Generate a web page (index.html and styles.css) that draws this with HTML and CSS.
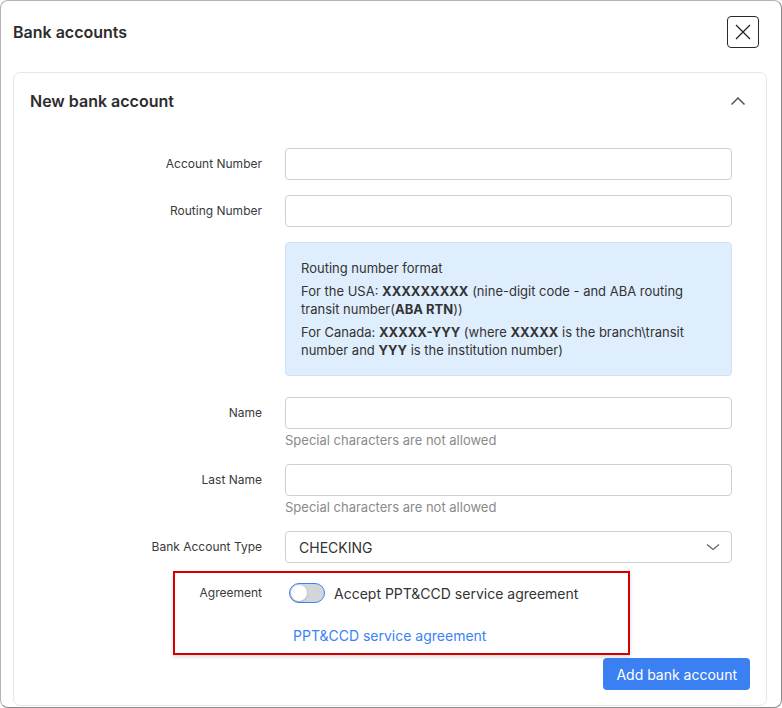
FILE: index.html
```html
<!DOCTYPE html>
<html lang="en">
<head>
  <meta charset="UTF-8">
  <title>Bank accounts</title>
  <link rel="stylesheet" href="styles.css">
</head>
<body>
  <!-- Modal -->
  <div class="modal">
    <div class="modal-header">
      <h2>Bank accounts</h2>
      <button class="close-btn" aria-label="Close">
        <svg width="18" height="18" viewBox="0 0 18 18"><path d="M2 2L16 16M16 2L2 16" stroke="#222" stroke-width="1.3" fill="none"/></svg>
      </button>
    </div>

    <!-- Card -->
    <div class="card">
      <div class="card-header">
        <h3>New bank account</h3>
        <svg width="16" height="10" viewBox="0 0 16 10"><path d="M1.5 8.5L8 2L14.5 8.5" stroke="#555" stroke-width="1.5" fill="none"/></svg>
      </div>

      <div class="form">
        <div class="row">
          <label>Account Number</label>
          <div class="field"><input type="text"></div>
        </div>
        <div class="row">
          <label>Routing Number</label>
          <div class="field"><input type="text"></div>
        </div>
        <div class="row info-row">
          <span></span>
          <div class="info">
            <p>Routing number format</p>
            <p>For the USA: <b>XXXXXXXXX</b> (nine-digit code - and ABA routing transit number(<b>ABA RTN</b>))</p>
            <p>For Canada: <b>XXXXX-YYY</b> (where <b>XXXXX</b> is the branch\transit number and <b>YYY</b> is the institution number)</p>
          </div>
        </div>
        <div class="row">
          <label>Name</label>
          <div class="field">
            <input type="text">
            <div class="help">Special characters are not allowed</div>
          </div>
        </div>
        <div class="row">
          <label>Last Name</label>
          <div class="field">
            <input type="text">
            <div class="help">Special characters are not allowed</div>
          </div>
        </div>
        <div class="row">
          <label>Bank Account Type</label>
          <div class="field">
            <div class="select">
              <span>CHECKING</span>
              <svg width="14" height="8" viewBox="0 0 14 8"><path d="M1 1.5L7 6.5L13 1.5" stroke="#666" stroke-width="1.3" fill="none"/></svg>
            </div>
          </div>
        </div>

        <div class="agreement">
          <div class="row toggle-row">
            <label>Agreement</label>
            <div class="field toggle-field">
              <span class="toggle"><span class="knob"></span></span>
              <span class="toggle-text">Accept PPT&amp;CCD service agreement</span>
            </div>
          </div>
          <div class="row link-row">
            <span></span>
            <div class="field"><a href="#" class="link">PPT&amp;CCD service agreement</a></div>
          </div>
        </div>
      </div>

      <div class="actions">
        <button class="primary">Add bank account</button>
      </div>
    </div>
  </div>
</body>
</html>
```

FILE: styles.css
```css
* {
  box-sizing: border-box;
}

body {
  margin: 0;
  background: #fff;
  font-family: Inter, "Noto Sans", sans-serif;
  color: #333;
}

.modal {
  width: 782px;
  height: 708px;
  border: 1px solid #b4b4b4;
  border-right-color: #8a8a8a;
  border-bottom-color: #8a8a8a;
  border-radius: 8px;
  overflow: hidden;
  padding: 15px 14px 0 12px;
}

.modal-header {
  display: flex;
  justify-content: space-between;
  align-items: center;
  height: 32px;
  padding-right: 8px;
}

.modal-header h2 {
  margin: 0;
  font-size: 16px;
  font-weight: 600;
  color: #2d2d2d;
}

.close-btn {
  width: 32px;
  height: 32px;
  border: 1px solid #2a2a2a;
  border-radius: 4px;
  background: #fff;
  display: flex;
  align-items: center;
  justify-content: center;
  padding: 0;
}

.card {
  margin-top: 24px;
  border: 1px solid #e3e6ea;
  border-radius: 7px;
  height: 634px;
}

.card-header {
  display: flex;
  justify-content: space-between;
  align-items: center;
  padding: 16px 20px 16px 16px;
}

.card-header h3 {
  margin: 0;
  font-size: 16px;
  line-height: 24px;
  font-weight: 600;
  color: #2d2d2d;
}

.form {
  padding: 19px 33px 0 16px;
}

.row {
  display: grid;
  grid-template-columns: 232px 447px;
  column-gap: 23px;
  margin-bottom: 15px;
}

.row label {
  text-align: right;
  font-size: 12px;
  line-height: 32px;
  color: #3a3a3a;
}

input {
  display: block;
  width: 100%;
  height: 32px;
  border: 1px solid #ccd0d6;
  border-radius: 4px;
  font: inherit;
}

.help {
  margin-top: 3px;
  font-size: 13px;
  line-height: 17px;
  color: #8a8a8a;
}

.info-row {
  margin-bottom: 21px;
}

.info {
  background: #dfeefd;
  border: 1px solid #cde2f8;
  border-radius: 4px;
  padding: 16px 15px 11px;
  font-size: 13px;
  line-height: 18px;
  color: #333;
}

.info p {
  margin: 0 0 5px;
}

.select {
  height: 32px;
  border: 1px solid #ccd0d6;
  border-radius: 4px;
  display: flex;
  align-items: center;
  justify-content: space-between;
  padding: 0 11px 0 13px;
  font-size: 14px;
  color: #333;
}

.agreement {
  position: relative;
}

.agreement::before {
  content: "";
  position: absolute;
  left: 143px;
  top: -7px;
  width: 453px;
  height: 80px;
  border: 2px solid #d40000;
  box-shadow: 0 2px 4px rgba(0, 0, 0, 0.15);
  pointer-events: none;
}

.toggle-row {
  margin-bottom: 17px;
}

.toggle-row label {
  line-height: 30px;
}

.toggle-field {
  display: flex;
  align-items: center;
  padding-left: 4px;
}

.toggle {
  width: 36px;
  height: 20px;
  border-radius: 10px;
  background: #d2d5da;
  border: 1px solid #3b82f6;
  position: relative;
  display: inline-block;
}

.knob {
  position: absolute;
  left: 1px;
  top: 1px;
  width: 16px;
  height: 16px;
  border-radius: 50%;
  background: #fff;
  box-shadow: 0 1px 2px rgba(0, 0, 0, 0.2);
}

.toggle-text {
  margin-left: 9px;
  font-size: 14px;
  color: #333;
}

.link-row {
  margin-bottom: 0;
}

.link-row .field {
  padding-left: 8px;
  line-height: 20px;
}

.link {
  font-size: 14px;
  color: #3b82f6;
  text-decoration: none;
}

.actions {
  display: flex;
  justify-content: flex-end;
  padding: 12px 16px 0;
}

.primary {
  background: #3a80f2;
  color: #fff;
  border: none;
  border-radius: 4px;
  height: 32px;
  padding: 0 13px;
  font: inherit;
  font-size: 14px;
}
```
